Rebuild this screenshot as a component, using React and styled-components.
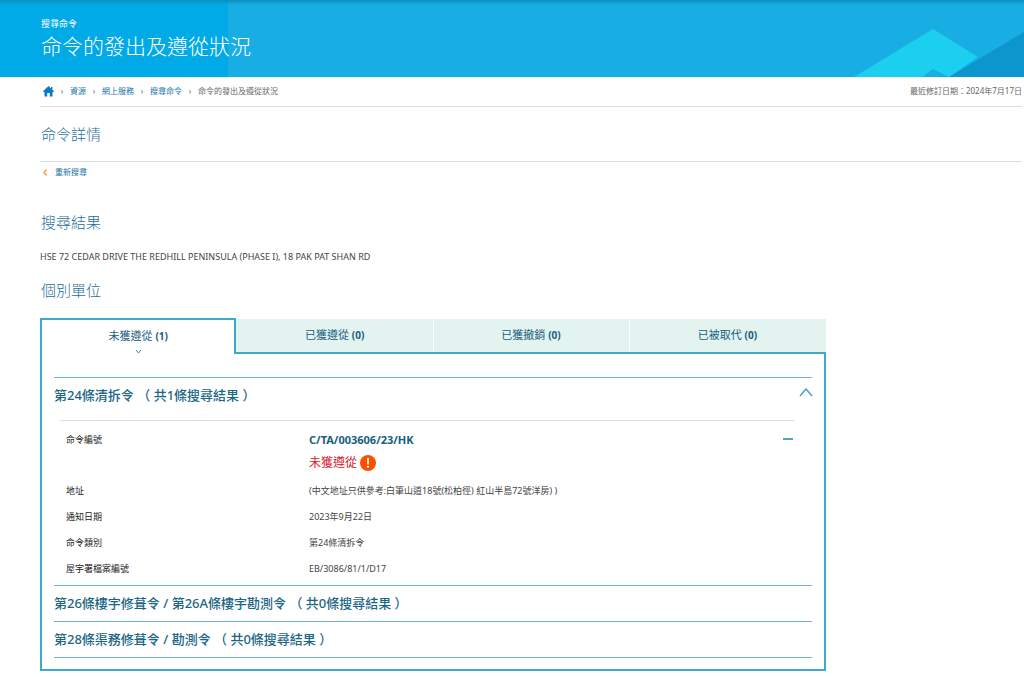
import React, { useState } from "react";
import styled, { createGlobalStyle } from "styled-components";

const GlobalStyle = createGlobalStyle`
  *, *::before, *::after { box-sizing: border-box; }
  body {
    margin: 0;
    background: #fff;
    color: #444;
    font-family: "Noto Sans", "Noto Sans CJK TC", sans-serif;
    font-size: 9px;
    line-height: 12px;
  }
  h1, h2, h3, p, dl, dd, ol { margin: 0; padding: 0; }
  button { font-family: inherit; color: inherit; border: 0; background: none; padding: 0; cursor: pointer; }
  a { color: #1c75a8; text-decoration: none; }
`;

const Banner = styled.header`
  position: relative;
  display: flex;
  flex-direction: column;
  height: 77px;
  padding: 18px 0 0 41px;
  color: #fff;
  background: linear-gradient(#0a8fc0, rgba(10, 143, 192, 0) 5px),
    linear-gradient(90deg, #00aae6 228px, #18ade3 228px);
`;

const BannerArt = styled.svg`
  position: absolute;
  right: 0;
  bottom: 0;
`;

const Kicker = styled.p`
  font-size: 9px;
  line-height: 12px;
`;

const Title = styled.h1`
  font-size: 21px;
  line-height: 32px;
  font-weight: 300;
`;

const Content = styled.main`
  padding: 0 2px 8px 40px;
`;

const TopRow = styled.div`
  display: flex;
  justify-content: space-between;
  align-items: center;
  height: 30px;
  padding-bottom: 1px;
  border-bottom: 1px solid #ddd;
  font-size: 8px;
  color: #666;
`;

const Crumbs = styled.ol`
  display: flex;
  align-items: center;
  list-style: none;
`;

const Crumb = styled.li`
  display: flex;
  align-items: center;
  & + &::before {
    content: "›";
    width: 16px;
    text-align: center;
    color: #777;
    font-size: 9px;
  }
  svg { display: block; margin-left: 3px; }
`;

const Heading = styled.h2`
  color: #1f7096;
  font-size: 15px;
  line-height: 24px;
  font-weight: 300;
  padding: ${(p) => p.$top}px 0 ${(p) => p.$bottom}px 1px;
  border-bottom: ${(p) => (p.$ruled ? "1px solid #ddd" : "0")};
`;

const BackLink = styled.a`
  display: inline-flex;
  align-items: center;
  gap: 8px;
  height: 20px;
  padding-left: 3px;
  font-size: 8px;
`;

const Address = styled.p`
  color: #444;
  line-height: 14px;
`;

const Results = styled.section`
  width: 80%;
`;

const Tabs = styled.div`
  display: grid;
  grid-template-columns: repeat(4, 1fr);
  align-items: end;
`;

const Tab = styled.button`
  position: relative;
  height: ${(p) => (p.$active ? 36 : 35)}px;
  padding-bottom: 2px;
  font-size: 11px;
  line-height: 14px;
  color: #17607f;
  background: ${(p) => (p.$active ? "#fff" : "#e3f3f0")};
  border: 0 solid #3fa9ca;
  border-width: ${(p) => (p.$active ? "2px 2px 0" : "0 0 2px")};
  box-shadow: ${(p) => (p.$divided ? "inset 1px 0 #fff" : "none")};
  b { font-size: 10px; }
  svg { position: absolute; left: calc(50% - 3px); top: 29px; }
`;

const Panel = styled.div`
  padding: 23px 12px 11px;
  border: 2px solid #3fa9ca;
  border-top: 0;
`;

const Group = styled.section`
  border-top: 1px solid #6fb5d0;
  &:last-child { border-bottom: 1px solid #6fb5d0; }
`;

const GroupTitle = styled.h3`
  font-size: 13px;
  line-height: 20px;
  font-weight: 500;
`;

const GroupToggle = styled.button`
  display: flex;
  justify-content: space-between;
  align-items: center;
  width: 100%;
  height: ${(p) => (p.$open ? 34 : 35)}px;
  padding-bottom: ${(p) => (p.$open ? 1 : 2)}px;
  font-size: inherit;
  line-height: inherit;
  font-weight: inherit;
  color: #1b6687;
  text-align: left;
  svg { align-self: flex-start; margin: 10px -1px 0 0; }
`;

const Order = styled.div`
  position: relative;
  margin: 8px 18px 0 6px;
  padding: 9px 6px 0;
  border-top: 1px solid #ddd;
`;

const Collapse = styled.button`
  position: absolute;
  right: 1px;
  top: 17px;
  width: 10px;
  height: 2px;
  background: #4fa3cc;
`;

const Fields = styled.dl`
  display: grid;
  grid-template-columns: 243px 1fr;
  grid-template-rows: 51px;
  grid-auto-rows: 26px;
  line-height: 20px;
`;

const Name = styled.dt`
  color: #222;
`;

const Value = styled.dd`
  color: #444;
`;

const OrderNumber = styled.strong`
  display: block;
  color: #17607f;
  font-size: 11px;
  line-height: 20px;
`;

const Status = styled.span`
  display: flex;
  align-items: center;
  color: #d8142c;
  font-size: 12px;
  line-height: 26px;
  svg { margin-left: 3px; }
`;

const tabs = [
  ["未獲遵從", 1],
  ["已獲遵從", 0],
  ["已獲撤銷", 0],
  ["已被取代", 0],
];

function Chevron({ width, height, up, color, stroke }) {
  const d = up
    ? `M1 ${height - 1} L${width / 2} 1 L${width - 1} ${height - 1}`
    : `M1 1 L${width / 2} ${height - 1} L${width - 1} 1`;
  return (
    <svg width={width} height={height} fill="none" stroke={color} strokeWidth={stroke} aria-hidden="true">
      <path d={d} />
    </svg>
  );
}

function AccordionGroup({ title, initial, children }) {
  const [open, setOpen] = useState(initial);
  return (
    <Group>
      <GroupTitle>
        <GroupToggle $open={open} aria-expanded={open} onClick={() => setOpen(!open)}>
          {title}
          {open && <Chevron width={14} height={9} up color="#5a9fc8" stroke="1.6" />}
        </GroupToggle>
      </GroupTitle>
      {open && children}
    </Group>
  );
}

export default function App() {
  const [active, setActive] = useState(0);
  return (
    <>
      <GlobalStyle />
      <Banner>
        <BannerArt width="176" height="57" viewBox="0 0 176 57" aria-hidden="true">
          <path d="M6 57 L85 9 L130 37 L101 57Z" fill="#1dcfef" />
          <path d="M74 57 L85 49 L97 55 L101 57Z" fill="#18ade3" />
          <path d="M101 57 L176 12 V57Z" fill="#0d96ce" />
        </BannerArt>
        <Kicker>搜尋命令</Kicker>
        <Title>命令的發出及遵從狀況</Title>
      </Banner>
      <Content>
        <TopRow>
          <nav aria-label="breadcrumb">
            <Crumbs>
              <Crumb>
                <a href="#home" aria-label="主頁">
                  <svg width="11" height="11" viewBox="0 0 11 11" fill="#0a78c2">
                    <path d="M5.5 0 L8 2.4 V1 H9.4 V3.8 L11 5.3 L10 6.2 L9.5 5.8 V10.5 H6.8 V7 H4.2 V10.5 H1.5 V5.8 L1 6.2 L0 5.3Z" />
                  </svg>
                </a>
              </Crumb>
              <Crumb><a href="#resources">資源</a></Crumb>
              <Crumb><a href="#services">網上服務</a></Crumb>
              <Crumb><a href="#orders">搜尋命令</a></Crumb>
              <Crumb aria-current="page">命令的發出及遵從狀況</Crumb>
            </Crumbs>
          </nav>
          <p>最近修訂日期：2024年7月17日</p>
        </TopRow>
        <Heading $top={15} $bottom={15} $ruled>命令詳情</Heading>
        <BackLink href="#search">
          <svg width="4" height="7" fill="none" stroke="#f39a3c" strokeWidth="1.3" aria-hidden="true">
            <path d="M3.5 0.5 L1 3.5 L3.5 6.5" />
          </svg>
          重新搜尋
        </BackLink>
        <Heading $top={28} $bottom={16}>搜尋結果</Heading>
        <Address>HSE 72 CEDAR DRIVE THE REDHILL PENINSULA (PHASE I), 18 PAK PAT SHAN RD</Address>
        <Heading $top={14} $bottom={16}>個別單位</Heading>
        <Results>
          <Tabs role="tablist">
            {tabs.map(([label, count], i) => (
              <Tab
                key={label}
                role="tab"
                aria-selected={i === active}
                $active={i === active}
                $divided={i > 1}
                onClick={() => setActive(i)}
              >
                {label} <b>({count})</b>
                {i === active && <Chevron width={7} height={5} color="#3f86a5" stroke="1" />}
              </Tab>
            ))}
          </Tabs>
          <Panel role="tabpanel">
            <AccordionGroup title="第24條清拆令 （ 共1條搜尋結果 ）" initial>
              <Order>
                <Collapse aria-label="收起" />
                <Fields>
                  <Name>命令編號</Name>
                  <Value>
                    <OrderNumber>C/TA/003606/23/HK</OrderNumber>
                    <Status>
                      未獲遵從
                      <svg width="16" height="16" viewBox="0 0 16 16" aria-hidden="true">
                        <circle cx="8" cy="8" r="8" fill="#fb5000" />
                        <path d="M7 3 H9 L8.7 9.4 H7.3Z" fill="#fff" />
                        <circle cx="8" cy="11.8" r="1.1" fill="#fff" />
                      </svg>
                    </Status>
                  </Value>
                  <Name>地址</Name>
                  <Value>(中文地址只供參考:白筆山道18號(松柏徑) 紅山半島72號洋房) )</Value>
                  <Name>通知日期</Name>
                  <Value>2023年9月22日</Value>
                  <Name>命令類別</Name>
                  <Value>第24條清拆令</Value>
                  <Name>屋宇署檔案編號</Name>
                  <Value>EB/3086/81/1/D17</Value>
                </Fields>
              </Order>
            </AccordionGroup>
            <AccordionGroup title="第26條樓宇修葺令 / 第26A條樓宇勘測令 （ 共0條搜尋結果 ）" initial={false} />
            <AccordionGroup title="第28條渠務修葺令 / 勘測令 （ 共0條搜尋結果 ）" initial={false} />
          </Panel>
        </Results>
      </Content>
    </>
  );
}
